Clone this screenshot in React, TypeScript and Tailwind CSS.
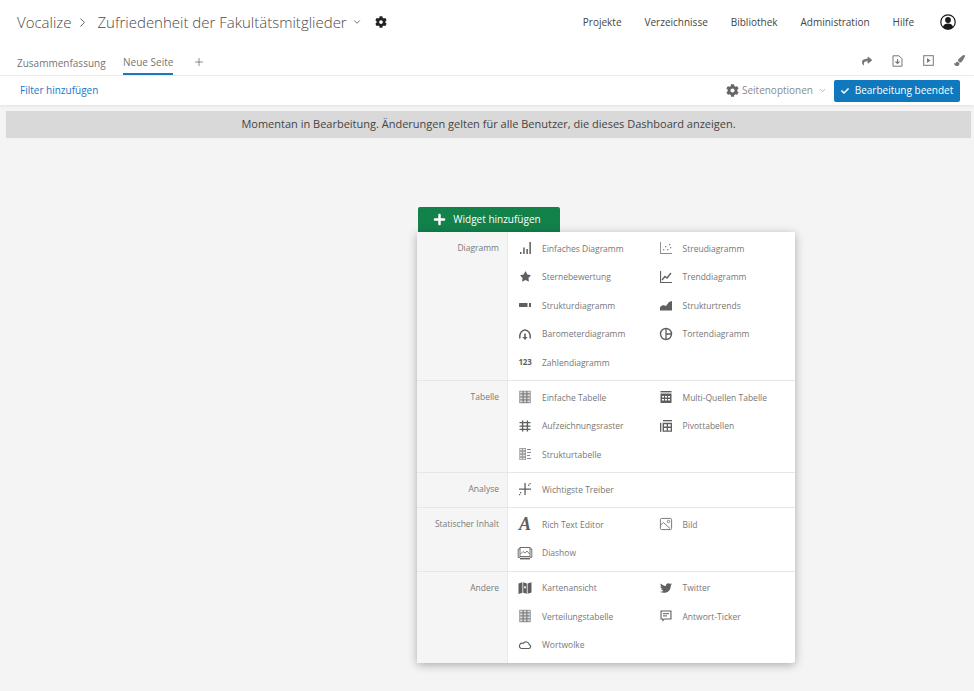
import type { ReactNode } from 'react'
import { FaCheck, FaCog, FaPaintBrush, FaPlus, FaShare, FaStar, FaTwitter } from 'react-icons/fa'
import { ChevronDown, ChevronRight, Plus } from 'lucide-react'

function Ico({ children }: { children: ReactNode }) {
  return (
    <svg width="14" height="14" viewBox="0 0 14 14" fill="#5f5f5f" stroke="none">
      {children}
    </svg>
  )
}

const BarsIcon = () => (
  <Ico>
    <rect x="2" y="11" width="1.500" height="2" />
    <rect x="5.200" y="6.500" width="1.500" height="6.500" />
    <rect x="8.400" y="8" width="1.500" height="5" />
    <rect x="11.400" y="1" width="1.500" height="12" />
  </Ico>
)
const ScatterIcon = () => (
  <Ico>
    <path d="M1 1h.9v11.100H13v.9H1z" fill="#8a8a8a" />
    <rect x="4" y="8" width="1.300" height="1.300" fill="#8a8a8a" />
    <rect x="6" y="5" width="1.300" height="1.300" fill="#8a8a8a" />
    <rect x="8" y="8" width="1.300" height="1.300" fill="#8a8a8a" />
    <rect x="10" y="3" width="1.300" height="1.300" fill="#8a8a8a" />
    <rect x="11" y="6" width="1.300" height="1.300" fill="#8a8a8a" />
  </Ico>
)
const StarIcon = () => <FaStar size={11} color="#5f5f5f" />
const TrendIcon = () => (
  <Ico>
    <path d="M1 1h1.100v10.900H13V13H1z" />
    <path d="M3 10l3-3.500 2 1.500 4-5" fill="none" stroke="#5f5f5f" strokeWidth="1.300" />
  </Ico>
)
const StructureIcon = () => (
  <Ico>
    <rect x="1" y="5" width="8.500" height="4" rx="0.500" />
    <rect x="11" y="5" width="2" height="4" />
  </Ico>
)
const AreaIcon = () => (
  <Ico>
    <path d="M1 12.500V9l3-2 3 1 3-4 3-1v9.500z" />
  </Ico>
)
const GaugeIcon = () => (
  <Ico>
    <path d="M1.800 11.500C.9 6.500 4 3 7 3s6.100 3.500 5.200 8.500" fill="none" stroke="#5f5f5f" strokeWidth="1.500" />
    <path d="M6.200 6.500h1.600v3.400h1.800L7 12.900 4.400 9.900h1.800z" />
  </Ico>
)
const PieIcon = () => (
  <Ico>
    <circle cx="7" cy="7" r="5.500" fill="none" stroke="#5f5f5f" strokeWidth="1.400" />
    <path d="M7 1.500V12.500M7 7H12.500" fill="none" stroke="#5f5f5f" strokeWidth="1.300" />
  </Ico>
)
const NumberIcon = () => <span className="text-[8px] font-bold tracking-[-0.2px] text-[#5f5f5f]">123</span>

function DotGrid() {
  const cells = []
  for (let r = 0; r < 4; r++) {
    for (let c = 0; c < 3; c++) {
      cells.push(<rect key={`${r}-${c}`} x={2 + c * 3.700} y={1.400 + r * 3} width="2.600" height="2" fill="#d8d8d8" />)
    }
  }
  return (
    <Ico>
      <rect x="1.400" y="0.800" width="11.200" height="12.400" fill="#777777" />
      {cells}
    </Ico>
  )
}
const GridIcon = () => <DotGrid />
const MultiTableIcon = () => (
  <Ico>
    <rect x="1.500" y="1" width="11" height="1.400" />
    <path fillRule="evenodd" d="M1.500 3.600h11V13h-11zM3 6v1.600h2V6zm3 0v1.600h2V6zm3 0v1.600h2V6zM3 9v1.600h2V9zm3 0v1.600h2V9zm3 0v1.600h2V9z" />
  </Ico>
)
const PivotIcon = () => (
  <Ico>
    <rect x="4" y="1" width="9" height="1.300" />
    <rect x="1" y="3.800" width="1.300" height="9" />
    <path fillRule="evenodd" d="M3.600 3.800H13v9H3.600zM5 5.200v2.400h2.700V5.200zm4 0v2.400h2.700V5.200zM5 9v2.400h2.700V9zm4 0v2.400h2.700V9z" />
  </Ico>
)
const RecordGridIcon = () => (
  <Ico>
    <path d="M3.900 1.500h1.400v11H3.900zM8.700 1.500h1.400v11H8.700zM1.500 3h11v1.300h-11zM1.500 6.400h11v1.300h-11zM1.500 9.800h11v1.300h-11z" />
  </Ico>
)
const StructureTableIcon = () => (
  <Ico>
    <rect x="1.400" y="1" width="6.600" height="12" fill="#8c8c8c" />
    <rect x="2" y="1.700" width="2.400" height="1.700" fill="#e4e4e4" />
    <rect x="5" y="1.700" width="2.400" height="1.700" fill="#e4e4e4" />
    <rect x="2" y="4.700" width="2.400" height="1.700" fill="#e4e4e4" />
    <rect x="5" y="4.700" width="2.400" height="1.700" fill="#e4e4e4" />
    <rect x="2" y="7.700" width="2.400" height="1.700" fill="#e4e4e4" />
    <rect x="5" y="7.700" width="2.400" height="1.700" fill="#e4e4e4" />
    <rect x="2" y="10.700" width="2.400" height="1.700" fill="#e4e4e4" />
    <rect x="5" y="10.700" width="2.400" height="1.700" fill="#e4e4e4" />
    <rect x="9" y="2" width="4" height="1" fill="#8a8a8a" />
    <rect x="9" y="5" width="4" height="1" fill="#8a8a8a" />
    <rect x="9" y="8" width="3" height="1" fill="#8a8a8a" />
    <rect x="9" y="11" width="4" height="1" fill="#8a8a8a" />
  </Ico>
)
const DriverIcon = () => (
  <Ico>
    <path d="M6.400 1h1.300v12H6.400zM1 6.400h12v1.300H1z" />
    <rect x="10" y="2.500" width="1.300" height="1.300" />
    <rect x="11.500" y="1" width="1.200" height="1.200" />
    <rect x="2" y="10" width="1.300" height="1.300" />
    <rect x="1" y="12" width="1.200" height="1.200" />
  </Ico>
)
const RichTextIcon = () => <span className="font-['Liberation_Serif',serif] text-[18px] leading-none font-bold italic text-[#5f5f5f]">A</span>
const ImageIcon = () => (
  <Ico>
    <rect x="1.400" y="1.400" width="11.200" height="11.200" rx="1.300" fill="none" stroke="#6d6d6d" strokeWidth="0.900" />
    <circle cx="9.500" cy="4.500" r="1.200" fill="none" stroke="#6d6d6d" strokeWidth="0.800" />
    <path d="M1.500 8l3-2.500 6.500 6" fill="none" stroke="#6d6d6d" strokeWidth="0.900" />
  </Ico>
)
const SlideshowIcon = () => (
  <svg width="16" height="14" viewBox="0 0 16 14" fill="none" stroke="#5f5f5f">
    <rect x="3" y="1.500" width="10" height="9" strokeWidth="0.900" />
    <path d="M3 3H1.200v8.400H3M13 3h1.800v8.400H13" strokeWidth="0.900" />
    <path d="M3 12.600h10" strokeWidth="1.600" />
    <path d="M3.500 8l2.500-2.500 2 1.500 2-2 2.500 3" strokeWidth="0.800" />
  </svg>
)
const MapIcon = () => (
  <Ico>
    <path fillRule="evenodd" d="M.5 2.500l3.900-1.300V11.800L.5 13zM5.200 1.200l3.600 1.200v10.400l-3.600-1zM9.600 2.400l3.900-1.200v10.400l-3.900 1.200zM7 5.200a1 1 0 1 0 .01 0z" />
  </Ico>
)
const TwitterIcon = () => <FaTwitter size={12} color="#5f5f5f" />
const TickerIcon = () => (
  <Ico>
    <path fillRule="evenodd" d="M1.500 1.500h11v9H5.600L3.400 12.800V10.500H1.500zM2.600 2.600v6.800h1.900v1l1-1h5.900V2.600z" />
    <rect x="4" y="4.200" width="6" height="1" />
    <rect x="4" y="6.400" width="4" height="1" />
  </Ico>
)
const CloudIcon = () => (
  <Ico>
    <path d="M3.300 10.500h7.700a1.900 1.900 0 0 0 .3-3.700A3.300 3.300 0 0 0 5.300 5.300 2.700 2.700 0 0 0 3.300 10.500z" fill="none" stroke="#5f5f5f" strokeWidth="1.200" />
  </Ico>
)

type Item = { label: string; icon: ReactNode }
type Section = { title: string; items: Item[] }

const SECTIONS: Section[] = [
  {
    title: 'Diagramm',
    items: [
      { label: 'Einfaches Diagramm', icon: <BarsIcon /> },
      { label: 'Streudiagramm', icon: <ScatterIcon /> },
      { label: 'Sternebewertung', icon: <StarIcon /> },
      { label: 'Trenddiagramm', icon: <TrendIcon /> },
      { label: 'Strukturdiagramm', icon: <StructureIcon /> },
      { label: 'Strukturtrends', icon: <AreaIcon /> },
      { label: 'Barometerdiagramm', icon: <GaugeIcon /> },
      { label: 'Tortendiagramm', icon: <PieIcon /> },
      { label: 'Zahlendiagramm', icon: <NumberIcon /> },
    ],
  },
  {
    title: 'Tabelle',
    items: [
      { label: 'Einfache Tabelle', icon: <GridIcon /> },
      { label: 'Multi-Quellen Tabelle', icon: <MultiTableIcon /> },
      { label: 'Aufzeichnungsraster', icon: <RecordGridIcon /> },
      { label: 'Pivottabellen', icon: <PivotIcon /> },
      { label: 'Strukturtabelle', icon: <StructureTableIcon /> },
    ],
  },
  {
    title: 'Analyse',
    items: [{ label: 'Wichtigste Treiber', icon: <DriverIcon /> }],
  },
  {
    title: 'Statischer Inhalt',
    items: [
      { label: 'Rich Text Editor', icon: <RichTextIcon /> },
      { label: 'Bild', icon: <ImageIcon /> },
      { label: 'Diashow', icon: <SlideshowIcon /> },
    ],
  },
  {
    title: 'Andere',
    items: [
      { label: 'Kartenansicht', icon: <MapIcon /> },
      { label: 'Twitter', icon: <TwitterIcon /> },
      { label: 'Verteilungstabelle', icon: <GridIcon /> },
      { label: 'Antwort-Ticker', icon: <TickerIcon /> },
      { label: 'Wortwolke', icon: <CloudIcon /> },
    ],
  },
]

const NAV = ['Projekte', 'Verzeichnisse', 'Bibliothek', 'Administration', 'Hilfe']

function WidgetMenu() {
  return (
    <div className="ml-[417px] w-[378px]">
      <button className="ml-px flex h-[25px] w-[142px] items-center justify-center gap-[7px] rounded-t-[2px] bg-[#12814a] pr-[4px] text-[10px] text-white">
        <FaPlus size={13} />
        Widget hinzufügen
      </button>
      <div className="rounded-b-[3px] bg-white shadow-[0_2px_10px_rgba(0,0,0,0.3)]">
        {SECTIONS.map((section, index) => (
          <div key={section.title} className={`flex ${index > 0 ? 'border-t border-[#e6e6e6]' : ''}`}>
            <div className="w-[91px] shrink-0 border-r border-[#e9e9e9] bg-[#f5f5f5] pt-[9px] pr-[8px] text-right text-[8.5px] leading-[14px] text-[#7a7a7a]">
              {section.title}
            </div>
            <div className="grid flex-1 grid-cols-[140.500px_1fr] pt-[2px] pb-[3.500px]">
              {section.items.map((item) => (
                <div key={item.label} className="flex h-[28.500px] items-center text-[8.500px] text-[#777]">
                  <span className="flex w-[34px] justify-center">{item.icon}</span>
                  <span className="pt-[2px]">{item.label}</span>
                </div>
              ))}
            </div>
          </div>
        ))}
      </div>
    </div>
  )
}

export default function App() {
  return (
    <div className="min-h-screen bg-[#f4f4f4] font-['Open_Sans',sans-serif]">
      <header className="bg-white">
        <div className="flex h-[44px] items-center pr-[18px] pl-[17px]">
          <span className="text-[15px] font-light text-[#4a4a4a]">Vocalize</span>
          <ChevronRight size={15} strokeWidth={1.400} className="mr-[7px] ml-[4px] text-[#4a4a4a]" />
          <span className="text-[15px] font-light text-[#4a4a4a]">Zufriedenheit der Fakultätsmitglieder</span>
          <ChevronDown size={10} strokeWidth={2} className="ml-[5px] text-[#555]" />
          <FaCog size={12} className="ml-[13px] text-[#222]" />
          <nav className="ml-auto flex items-center gap-[23px] pt-px text-[10px] text-[#444]">
            {NAV.map((name) => (
              <span key={name}>{name}</span>
            ))}
          </nav>
          <svg width="16" height="16" viewBox="0 0 16 16" className="ml-[26px]">
            <circle cx="8" cy="8" r="7.200" fill="white" stroke="#1a1a1a" strokeWidth="1.200" />
            <circle cx="8" cy="6" r="2.900" fill="#1a1a1a" />
            <path d="M2.800 13.200c.8-3 2.800-3.800 5.200-3.800s4.400.8 5.200 3.800a7 7 0 0 1-10.400 0z" fill="#1a1a1a" />
          </svg>
        </div>
        <div className="flex h-[32px] items-stretch border-b border-[#eee] pr-[9px] pl-[17px] text-[10px] text-[#757575]">
          <span className="flex items-center pt-[8px]">Zusammenfassung</span>
          <span className="ml-[17.500px] flex items-center border-b-2 border-[#1a78c2] pt-[8px]">Neue Seite</span>
          <span className="ml-[20px] flex items-center pt-[5px]">
            <Plus size={12} strokeWidth={1.500} className="text-[#666]" />
          </span>
          <div className="ml-auto flex items-center gap-[20px] pt-[2px] text-[#777]">
            <FaShare size={10} />
            <svg width="11" height="12" viewBox="0 0 11 12" fill="none" stroke="#777">
              <path d="M1 .8h6l3 3v7.400H1z" />
              <path d="M5.500 4v4M3.500 6.500l2 2 2-2" strokeWidth="1.100" />
            </svg>
            <svg width="11" height="11" viewBox="0 0 11 11" fill="none" stroke="#777">
              <rect x=".7" y=".7" width="9.600" height="9.600" />
              <path d="M4 3l3.500 2.500L4 8z" fill="#777" stroke="none" />
            </svg>
            <FaPaintBrush size={11} />
          </div>
        </div>
        <div className="flex h-[29px] items-center pr-[14px] pl-[20px] shadow-[0_1px_3px_rgba(0,0,0,0.08)]">
          <span className="text-[10px] text-[#1a78c2]">Filter hinzufügen</span>
          <div className="ml-auto flex items-center text-[10px] text-[#8a8a8a]">
            <FaCog size={13} className="mr-[3px] text-[#666]" />
            Seitenoptionen
            <ChevronDown size={9} strokeWidth={1.600} className="ml-[5px]" />
          </div>
          <button className="ml-[7px] flex h-[22px] w-[126px] items-center justify-center gap-[6px] rounded-[2px] bg-[#1078bd] text-[10px] text-white">
            <FaCheck size={8} />
            Bearbeitung beendet
          </button>
        </div>
      </header>
      <div className="mt-[6px] mr-[3px] ml-[6px] flex h-[27px] items-center justify-center bg-[#d9d9d9] text-[11px] text-[#444]">
        Momentan in Bearbeitung. Änderungen gelten für alle Benutzer, die dieses Dashboard anzeigen.
      </div>
      <div className="mt-[69px]">
        <WidgetMenu />
      </div>
    </div>
  )
}
